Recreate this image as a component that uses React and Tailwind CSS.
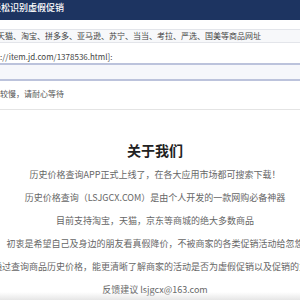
export default function App() {
  const lines = [
    "历史价格查询APP正式上线了，在各大应用市场都可搜索下载！",
    "历史价格查询（LSJGCX.COM）是由个人开发的一款网购必备神器",
    "目前支持淘宝，天猫，京东等商城的绝大多数商品",
    "初衷是希望自己及身边的朋友看真假降价，不被商家的各类促销活动给忽悠",
    "通过查询商品历史价格，能更清晰了解商家的活动是否为虚假促销以及促销的力度",
    "反馈建议 lsjgcx@163.com",
  ];
  return (
    <div
      className="relative h-[300px] w-[300px] overflow-hidden bg-white"
      style={{ fontFamily: '"Noto Sans CJK SC", "Noto Sans", sans-serif' }}
    >
      <header className="flex h-[20px] items-start bg-[#1d3461] pt-[2px]">
        <span className="-ml-[8px] whitespace-nowrap text-[9px] font-medium leading-[12px] text-white">
          轻松识别虚假促销
        </span>
      </header>

      <div className="mt-[9px] flex h-[14px] items-center border-y border-[#e3e5ea] bg-[#f7f8fa]">
        <span className="-ml-[3px] whitespace-nowrap text-[8px] text-[#444]">
          天猫、淘宝、拼多多、亚马逊、苏宁、当当、考拉、严选、国美等商品网址
        </span>
      </div>

      <div className="mt-[9px] whitespace-nowrap text-[8px] leading-[10px] text-[#444]">
        ://item.jd.com/1378536.html]:
      </div>

      <div className="mt-[1px] h-[18px] border-y-2 border-[#bcc3dc] bg-[#f6f7fb]" />

      <div className="mt-[8px] whitespace-nowrap text-[8px] leading-[10px] text-[#555]">
        较慢，请耐心等待
      </div>

      <div className="mt-[10px] h-px bg-[#e4e4e4]" />

      <div className="-ml-[145px] w-[600px] text-center">
        <h2 className="mt-[31px] text-[14px] font-bold leading-[18px] text-[#222]">关于我们</h2>
        <div className="mt-[4px]">
          {lines.map((t) => (
            <p key={t} className="whitespace-nowrap text-[9px] leading-[23px] text-[#666]">
              {t}
            </p>
          ))}
        </div>
      </div>

      <div className="pointer-events-none absolute bottom-0 left-0 h-[8px] w-full bg-gradient-to-b from-transparent to-[#e6e6e6]" />
    </div>
  );
}
